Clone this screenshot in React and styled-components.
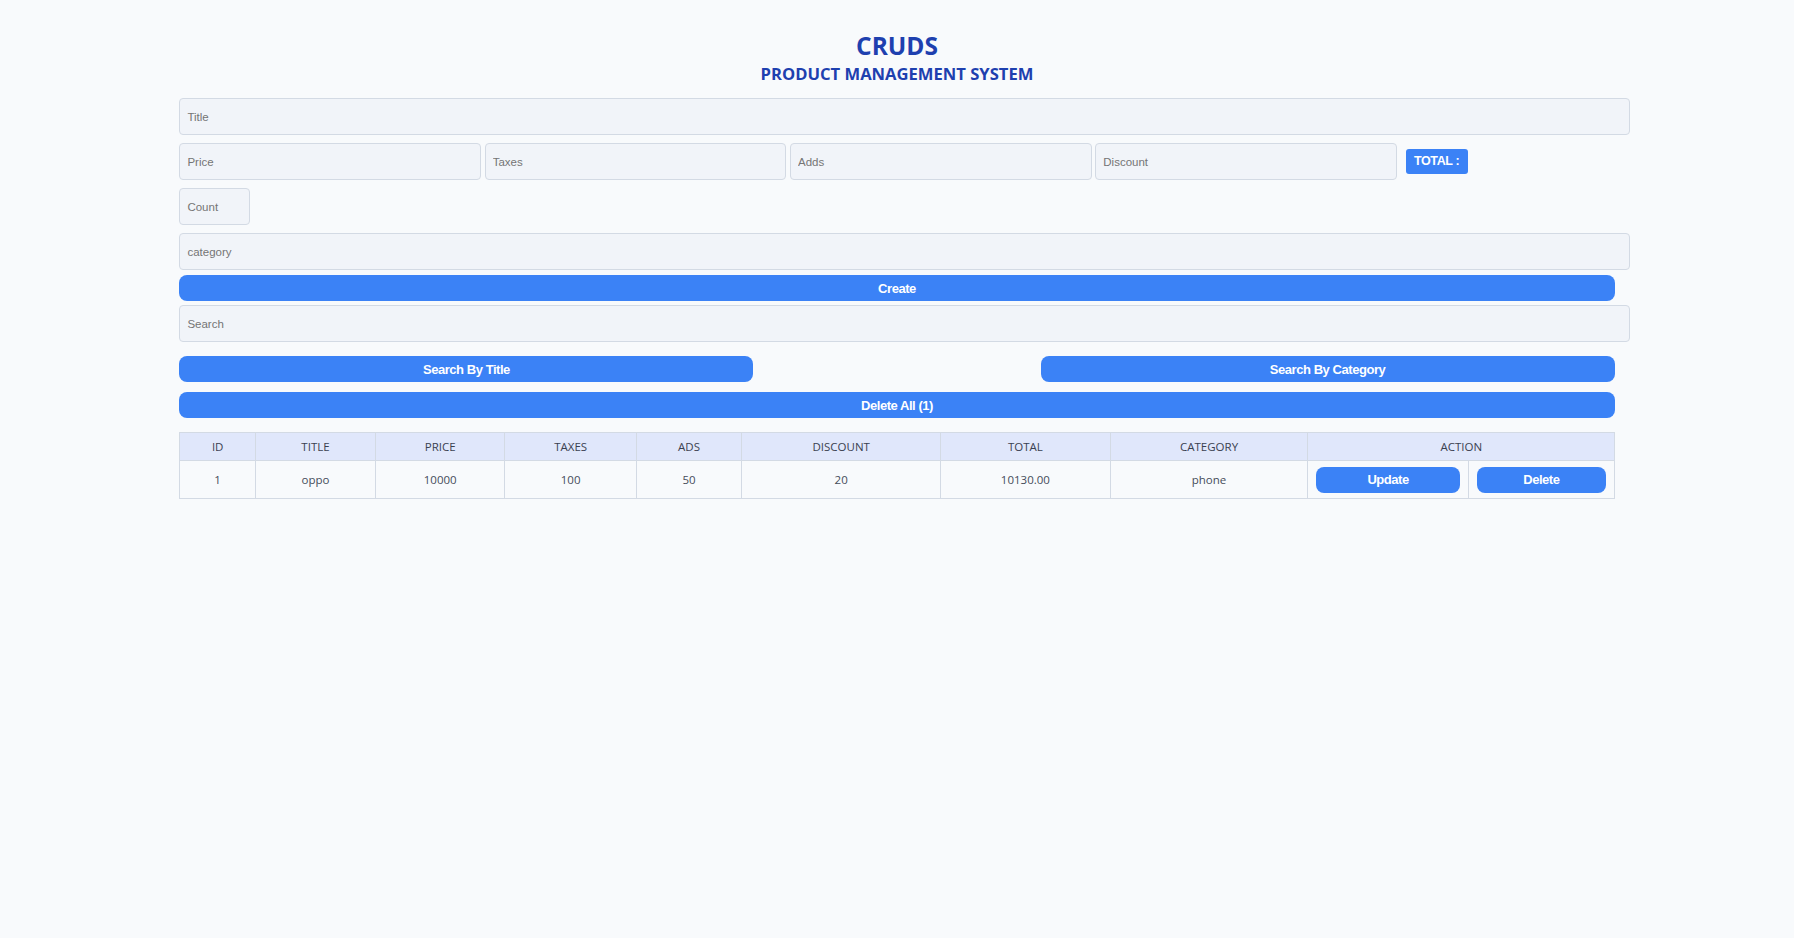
import React from 'react';
import styled, { createGlobalStyle } from 'styled-components';

const GlobalStyle = createGlobalStyle`
  body {
    margin: 0;
    background: #f8fafc;
    font-family: "Liberation Sans", Arial, sans-serif;
  }
`;

const Page = styled.div`
  width: 80%;
  margin: 0 auto;
  padding-bottom: 40px;
`;

const Header = styled.header`
  text-align: center;
  padding-top: 29px;
  margin-bottom: 9px;
  color: #1e40af;
  font-family: "Open Sans", sans-serif;
  font-weight: 700;

  > h1 {
    margin: 0;
    font-size: 24.5px;
    line-height: normal;
  }

  > h2 {
    margin: 0;
    font-size: 16.6px;
    line-height: normal;
  }
`;

const Form = styled.div`
  display: flex;
  flex-direction: column;
  align-items: flex-start;
`;

const Input = styled.input`
  box-sizing: border-box;
  width: ${p => p.$w || 'calc(100% + 15px)'};
  height: 37px;
  margin: 4px 0;
  padding: 0 7px;
  border: 1px solid #d3dae4;
  border-radius: 4px;
  background: #f1f4f9;
  font-family: "Liberation Sans", Arial, sans-serif;
  font-size: 11.5px;
  color: #333;
  outline: none;

  &::placeholder {
    color: #757575;
  }
`;

const PriceRow = styled.div`
  display: flex;
  align-items: center;
  gap: 3.8px;

  > span {
    margin-left: 5px;
  }
`;

const Total = styled.span`
  display: inline-block;
  width: 62px;
  height: 25px;
  line-height: 25px;
  text-align: center;
  border-radius: 3px;
  background: #3b82f6;
  color: #fff;
  font-family: "Liberation Sans", Arial, sans-serif;
  font-size: 12.5px;
  font-weight: 700;
  letter-spacing: -0.4px;
`;

const Button = styled.button`
  display: block;
  width: ${p => p.$w || '100%'};
  height: 26px;
  margin-top: ${p => p.$mt || 0}px;
  padding: 0;
  border: none;
  border-radius: 8px;
  background: #3b82f6;
  color: #fff;
  font-family: "Liberation Sans", Arial, sans-serif;
  font-size: 13px;
  font-weight: 700;
  letter-spacing: -0.45px;
  cursor: pointer;
`;

const SearchRow = styled.div`
  display: flex;
  justify-content: space-between;
  margin-top: 10px;
`;

const Table = styled.table`
  width: 100%;
  margin-top: 14px;
  border-collapse: collapse;
  table-layout: fixed;
  font-family: "Open Sans", sans-serif;
  font-size: 11.5px;

  th, td {
    border: 1px solid #d3dae4;
    text-align: center;
    padding: 0;
  }

  th {
    height: 27px;
    background: #e0e7fb;
    color: #3a4150;
    font-weight: 400;
  }

  td {
    height: 37px;
    color: #454c5a;
  }
`;

const ActionCell = styled.td`
  && {
    padding: 0 8px;
  }
`;

const columns = [75.5, 120.2, 129.3, 131.5, 105.3, 199, 169.4, 197.9, 160.2, 146.4];
const headers = ['ID', 'TITLE', 'PRICE', 'TAXES', 'ADS', 'DISCOUNT', 'TOTAL', 'CATEGORY'];

const products = [
  { id: 1, title: 'oppo', price: 10000, taxes: 100, ads: 50, discount: 20, total: '10130.00', category: 'phone' },
];

const App = () => {
  return (
    <>
      <GlobalStyle />
      <Page>
        <Header>
          <h1>CRUDS</h1>
          <h2>PRODUCT MANAGEMENT SYSTEM</h2>
        </Header>
        <Form>
          <Input placeholder="Title" />
          <PriceRow>
            <Input $w="301.5px" placeholder="Price" />
            <Input $w="301.5px" placeholder="Taxes" />
            <Input $w="301.5px" placeholder="Adds" />
            <Input $w="301.5px" placeholder="Discount" />
            <Total>TOTAL :</Total>
          </PriceRow>
          <Input $w="71px" placeholder="Count" />
          <Input placeholder="category" />
          <Button $mt={1}>Create</Button>
          <Input placeholder="Search" />
        </Form>
        <SearchRow>
          <Button $w="40%">Search By Title</Button>
          <Button $w="40%">Search By Category</Button>
        </SearchRow>
        <Button $mt={10}>Delete All (1)</Button>
        <Table>
          <colgroup>
            {columns.map((w, i) => <col key={i} style={{ width: w }} />)}
          </colgroup>
          <thead>
            <tr>
              {headers.map(h => <th key={h}>{h}</th>)}
              <th colSpan={2}>ACTION</th>
            </tr>
          </thead>
          <tbody>
            {products.map(p => (
              <tr key={p.id}>
                <td>{p.id}</td>
                <td>{p.title}</td>
                <td>{p.price}</td>
                <td>{p.taxes}</td>
                <td>{p.ads}</td>
                <td>{p.discount}</td>
                <td>{p.total}</td>
                <td>{p.category}</td>
                <ActionCell><Button>Update</Button></ActionCell>
                <ActionCell><Button>Delete</Button></ActionCell>
              </tr>
            ))}
          </tbody>
        </Table>
      </Page>
    </>
  );
};

export default App;
